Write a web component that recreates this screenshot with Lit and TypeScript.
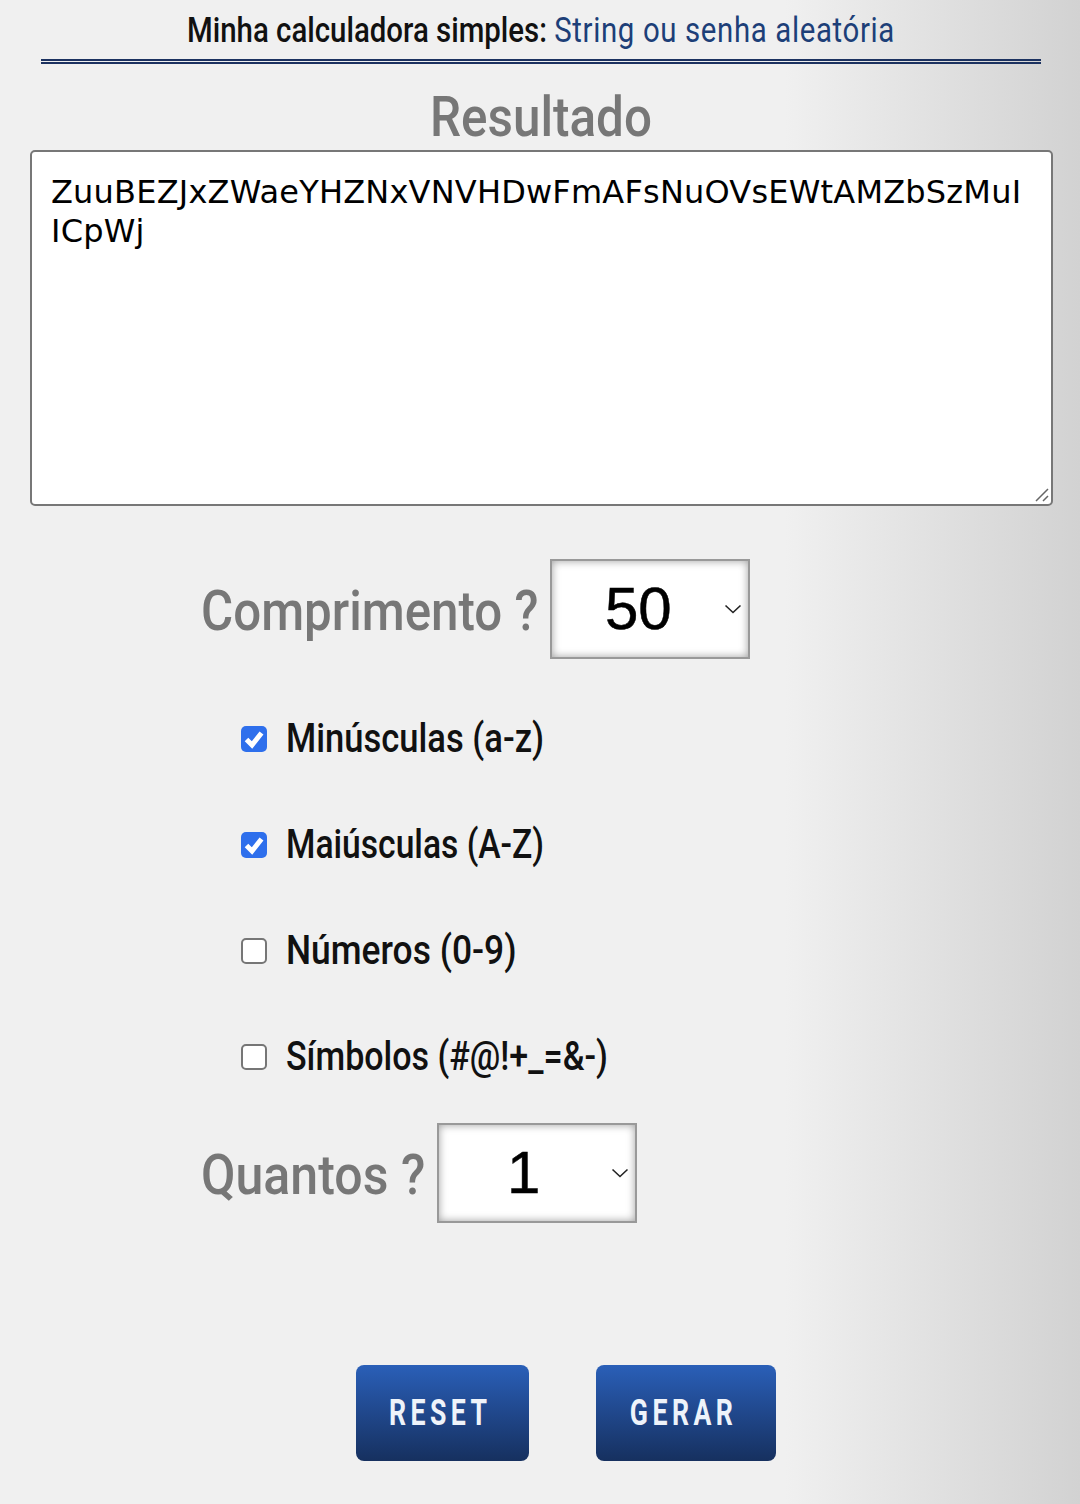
import { LitElement, html, css } from "lit";
import { customElement } from "lit/decorators.js";

const chevron = html`<svg class="chev" width="18" height="10" viewBox="0 0 18 10"><path d="M1.5 1.5 L9 8.5 L16.5 1.5" fill="none" stroke="#222" stroke-width="1.6"/></svg>`;
const check = html`<svg width="26" height="26" viewBox="0 0 26 26"><path d="M5.5 13.5 L11 19 L20.5 7" fill="none" stroke="#fff" stroke-width="5"/></svg>`;

@customElement("app-root")
export class AppRoot extends LitElement {
  static styles = css`
    :host { display: block; width: 1080px; height: 1504px; overflow: hidden;
      background: linear-gradient(90deg, #f0f0f0 0, #f0f0f0 785px, #d2d2d2 1080px);
      font-family: Roboto, "Liberation Sans", sans-serif; }
    * { box-sizing: border-box; }
    .narrow { display: inline-block; white-space: nowrap; transform-origin: left center; }
    header { margin: 0 39px 0 41px; height: 64px; border-bottom: 5px double #1c3260;
      display: flex; justify-content: center; align-items: center; padding-top: 3px; }
    .title { width: 708px; font-size: 35px; font-weight: 500; color: #111; line-height: 40px; transform: scaleX(0.84); }
    .title b { font-weight: 400; color: #1d3f78; letter-spacing: 0.75px; }
    .result { height: 86px; padding-top: 20px; display: flex; justify-content: center; align-items: center; color: #777; }
    .result span { width: 220px; font-size: 56px; font-weight: 500; transform: scaleX(0.882); }
    .output { position: relative; margin-left: 30px; width: 1023px; height: 356px; background: #fff;
      border: 2px solid #777; border-radius: 5px; padding: 21px 19px;
      font: 32px/39px "DejaVu Sans", sans-serif; letter-spacing: 0.2px; color: #000; }
    .grip { position: absolute; right: 1px; bottom: 1px; }
    .form { padding-left: 201px; }
    .row { display: flex; align-items: center; height: 100px; }
    .len { margin-top: 53px; }
    .lab { color: #777; font-size: 56px; font-weight: 500; transform: scaleX(0.88); line-height: 100px; padding-top: 3px; }
    .len .lab { width: 349px; }
    .qty .lab { width: 236px; transform: scaleX(0.894); }
    .sel { position: relative; width: 200px; height: 100px; border: 2px solid #999; background: #fff;
      box-shadow: inset 0 0 9px #a0a0a0; font: 60px/96px "Liberation Sans", sans-serif; color: #000;
      -webkit-text-stroke: 0.5px #000; padding-left: 53px; }
    .qty .sel { padding-left: 68px; }
    .chev { position: absolute; right: 6px; top: 43px; }
    .checks { padding-left: 40px; margin-top: 26px; }
    .opt { display: flex; align-items: center; height: 106px; }
    .box { width: 26px; height: 26px; margin-top: 2px; border-radius: 5px; background: #fff; border: 2px solid #767676; flex: none; margin-right: 19px; }
    .box.on { background: #2e6fec; border: 0; }
    .box svg { display: block; }
    .opt span { font-size: 41px; font-weight: 500; color: #111; }
    .qty { margin-top: 14px; }
    .actions { display: flex; padding-left: 356px; gap: 67px; margin-top: 142px; }
    .btn { height: 96px; border-radius: 8px; background: linear-gradient(#2a5fb8, #16305f);
      display: flex; align-items: center; justify-content: center; color: #eef3fa; overflow: hidden; }
    .btn span { font-size: 36px; font-weight: 700; letter-spacing: 6px; transform: scaleX(0.74); transform-origin: center; margin-right: 4px; }
    .w1 { width: 173px; }
    .w2 { width: 180px; }
  `;

  render() {
    const opts: [string, boolean, number][] = [
      ["Minúsculas (a-z)", true, 0.843],
      ["Maiúsculas (A-Z)", true, 0.82],
      ["Números (0-9)", false, 0.863],
      ["Símbolos (#@!+_=&-)", false, 0.83],
    ];
    return html`
      <header><span class="narrow title">Minha calculadora simples: <b>String ou senha aleatória</b></span></header>
      <div class="result"><span class="narrow">Resultado</span></div>
      <div class="output">ZuuBEZJxZWaeYHZNxVNVHDwFmAFsNuOVsEWtAMZbSzMuI<br />ICpWj
        <svg class="grip" width="16" height="16" viewBox="0 0 16 16"><path d="M2 14 L14 2 M9 14 L14 9" stroke="#666" stroke-width="1.5"/></svg>
      </div>
      <div class="form">
        <div class="row len"><span class="narrow lab">Comprimento ?</span><div class="sel">50${chevron}</div></div>
        <div class="checks">
          ${opts.map(([t, on, sx]) => html`<div class="opt"><div class="box ${on ? "on" : ""}">${on ? check : ""}</div><span class="narrow" style="transform: scaleX(${sx})">${t}</span></div>`)}
        </div>
        <div class="row qty"><span class="narrow lab">Quantos ?</span><div class="sel">1${chevron}</div></div>
      </div>
      <div class="actions">
        <div class="btn w1"><span class="narrow">RESET</span></div>
        <div class="btn w2"><span class="narrow">GERAR</span></div>
      </div>
    `;
  }
}
